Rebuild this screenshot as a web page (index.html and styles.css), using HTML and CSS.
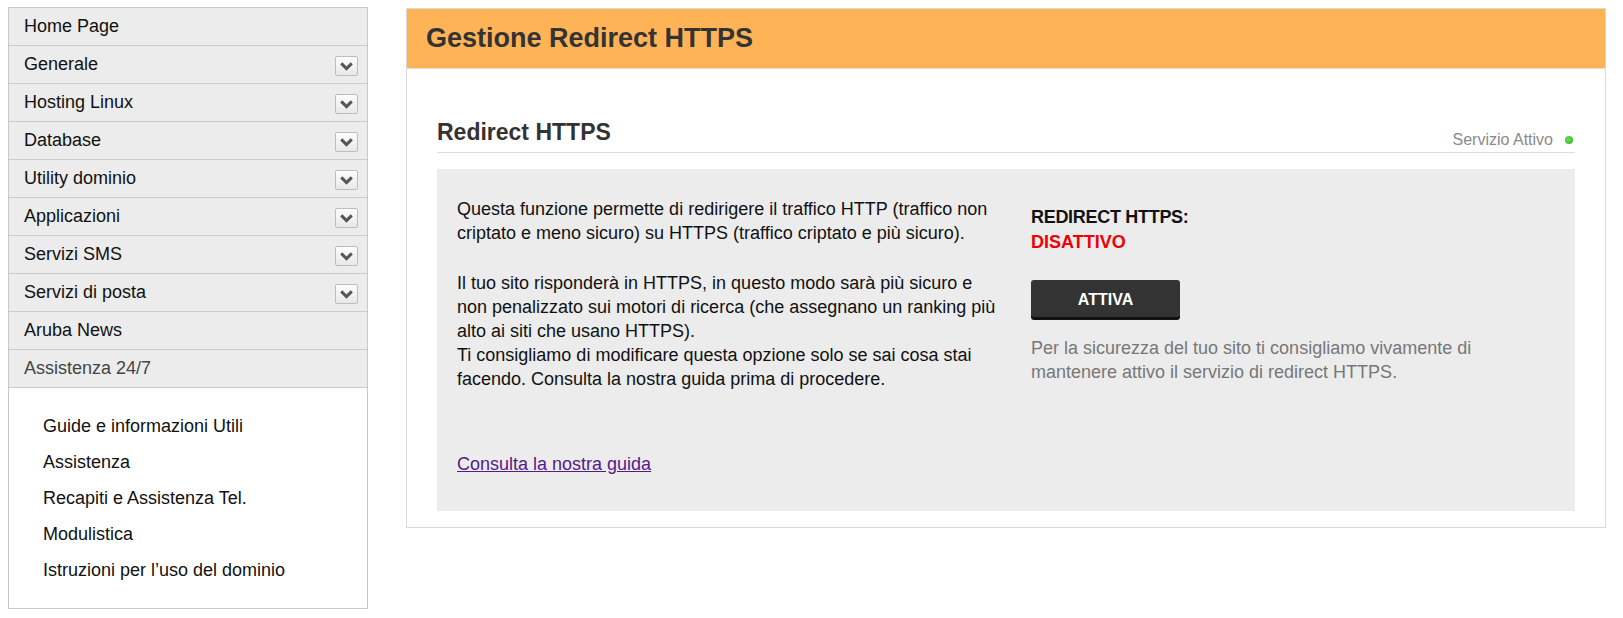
FILE: index.html
```html
<!DOCTYPE html>
<html lang="it">
<head>
<meta charset="utf-8">
<title>Gestione Redirect HTTPS</title>
<link rel="stylesheet" href="styles.css">
</head>
<body>
<div class="page">
  <nav class="sidebar">
    <ul class="menu">
      <li class="menu-item"><span>Home Page</span></li>
      <li class="menu-item"><span>Generale</span><i class="toggle"><svg viewBox="0 0 20 17" width="20" height="17"><path d="M5 6 L10 11 L15 6" fill="none" stroke="#555" stroke-width="2.8"/></svg></i></li>
      <li class="menu-item"><span>Hosting Linux</span><i class="toggle"><svg viewBox="0 0 20 17" width="20" height="17"><path d="M5 6 L10 11 L15 6" fill="none" stroke="#555" stroke-width="2.8"/></svg></i></li>
      <li class="menu-item"><span>Database</span><i class="toggle"><svg viewBox="0 0 20 17" width="20" height="17"><path d="M5 6 L10 11 L15 6" fill="none" stroke="#555" stroke-width="2.8"/></svg></i></li>
      <li class="menu-item"><span>Utility dominio</span><i class="toggle"><svg viewBox="0 0 20 17" width="20" height="17"><path d="M5 6 L10 11 L15 6" fill="none" stroke="#555" stroke-width="2.8"/></svg></i></li>
      <li class="menu-item"><span>Applicazioni</span><i class="toggle"><svg viewBox="0 0 20 17" width="20" height="17"><path d="M5 6 L10 11 L15 6" fill="none" stroke="#555" stroke-width="2.8"/></svg></i></li>
      <li class="menu-item"><span>Servizi SMS</span><i class="toggle"><svg viewBox="0 0 20 17" width="20" height="17"><path d="M5 6 L10 11 L15 6" fill="none" stroke="#555" stroke-width="2.8"/></svg></i></li>
      <li class="menu-item"><span>Servizi di posta</span><i class="toggle"><svg viewBox="0 0 20 17" width="20" height="17"><path d="M5 6 L10 11 L15 6" fill="none" stroke="#555" stroke-width="2.8"/></svg></i></li>
      <li class="menu-item"><span>Aruba News</span></li>
      <li class="menu-item menu-open"><span>Assistenza 24/7</span></li>
    </ul>
    <ul class="submenu">
      <li>Guide e informazioni Utili</li>
      <li>Assistenza</li>
      <li>Recapiti e Assistenza Tel.</li>
      <li>Modulistica</li>
      <li>Istruzioni per l’uso del dominio</li>
    </ul>
  </nav>

  <main class="panel">
    <header class="panel-header"><h1>Gestione Redirect HTTPS</h1></header>
    <div class="panel-body">
      <div class="section-head">
        <h2>Redirect HTTPS</h2>
        <div class="status">Servizio Attivo <span class="dot"></span></div>
      </div>
      <div class="box">
        <div class="col-left">
          <p class="p1">Questa funzione permette di redirigere il traffico HTTP (traffico non criptato e meno sicuro) su HTTPS (traffico criptato e più sicuro).</p>
          <p class="p2">Il tuo sito risponderà in HTTPS, in questo modo sarà più sicuro e non penalizzato sui motori di ricerca (che assegnano un ranking più alto ai siti che usano HTTPS).<br>Ti consigliamo di modificare questa opzione solo se sai cosa stai facendo. Consulta la nostra guida prima di procedere.</p>
          <a class="guide" href="#">Consulta la nostra guida</a>
        </div>
        <div class="col-right">
          <div class="state-label">REDIRECT HTTPS:</div>
          <div class="state-value">DISATTIVO</div>
          <button class="btn">ATTIVA</button>
          <p class="hint">Per la sicurezza del tuo sito ti consigliamo vivamente di mantenere attivo il servizio di redirect HTTPS.</p>
        </div>
      </div>
    </div>
  </main>
</div>
</body>
</html>
```

FILE: styles.css
```css
* { box-sizing: border-box; }
html, body { margin: 0; padding: 0; background: #fff; }
body {
  font-family: "Liberation Sans", Arial, sans-serif;
  color: #111;
  font-size: 18px;
}
.page {
  display: flex;
  align-items: flex-start;
  gap: 38px;
  padding: 7px 8px;
}
.sidebar {
  width: 360px;
  flex: none;
  border: 1px solid #c8c8c8;
  background: #fff;
}
.menu, .submenu { list-style: none; margin: 0; padding: 0; }
.menu-item {
  height: 38px;
  display: flex;
  align-items: center;
  justify-content: space-between;
  padding: 0 9px 0 15px;
  background: #ececec;
  border-bottom: 1px solid #cbcbcb;
  font-size: 18px;
  color: #111;
}
.menu-open { color: #444; }
.toggle {
  display: block;
  width: 23px;
  height: 20px;
  border: 1px solid #bdbdbd;
  border-radius: 2px;
  background: linear-gradient(#fdfdfd, #e8e8e8);
  margin-top: 2px;
}
.toggle svg { display: block; width: 21px; height: 18px; }
.submenu { padding: 20px 0 20px 34px; }
.submenu li { line-height: 36px; font-size: 18px; color: #111; }

.panel {
  width: 1200px;
  flex: none;
  border: 1px solid #dadada;
  background: #fff;
  margin-top: 1px;
}
.panel-header {
  height: 60px;
  background: #ffb357;
  display: flex;
  align-items: center;
  padding-left: 19px;
  border-bottom: 1px solid #e9e0d4;
}
.panel-header h1 {
  margin: 0;
  font-size: 27px;
  font-weight: bold;
  color: #333;
}
.panel-body { padding: 49px 30px 16px 30px; }
.section-head {
  display: flex;
  justify-content: space-between;
  align-items: flex-end;
  border-bottom: 1px solid #dcdcdc;
  height: 35px;
}
.section-head h2 {
  margin: 0 0 6px;
  font-size: 23px;
  line-height: 28px;
  color: #333;
}
.status {
  display: flex;
  align-items: center;
  gap: 12px;
  font-size: 16px;
  line-height: 20px;
  color: #8a8a8a;
  margin-bottom: 2px;
  padding-right: 2px;
}
.dot {
  width: 8px;
  height: 8px;
  border-radius: 50%;
  background: radial-gradient(circle at 40% 40%, #6be05a, #22b01b);
}
.box {
  margin-top: 16px;
  background: #ececec;
  display: grid;
  grid-template-columns: 1fr 1fr;
  padding: 28px 0 35px;
}
.col-left { padding: 0 0 0 20px; }
.col-right { padding: 8px 20px 0 25px; }
.box p { margin: 0; line-height: 24px; font-size: 18px; }
.p1 { margin-bottom: 26px !important; }
.guide {
  display: inline-block;
  margin-top: 61px;
  line-height: 24px;
  color: #551a8b;
  text-decoration: underline;
}
.state-label, .state-value {
  font-weight: bold;
  font-size: 18px;
  line-height: 25px;
}
.state-label { color: #111; letter-spacing: -0.3px; }
.state-value { color: #ee0000; }
.btn {
  display: block;
  margin-top: 25px;
  width: 149px;
  height: 37px;
  border: none;
  border-radius: 3px;
  background: #333;
  box-shadow: 0 3px 0 #111;
  color: #fff;
  font-family: "Liberation Sans", Arial, sans-serif;
  font-weight: bold;
  font-size: 16px;
  padding: 2px 0 0;
}
.hint { margin-top: 19px !important; color: #777; }
```
